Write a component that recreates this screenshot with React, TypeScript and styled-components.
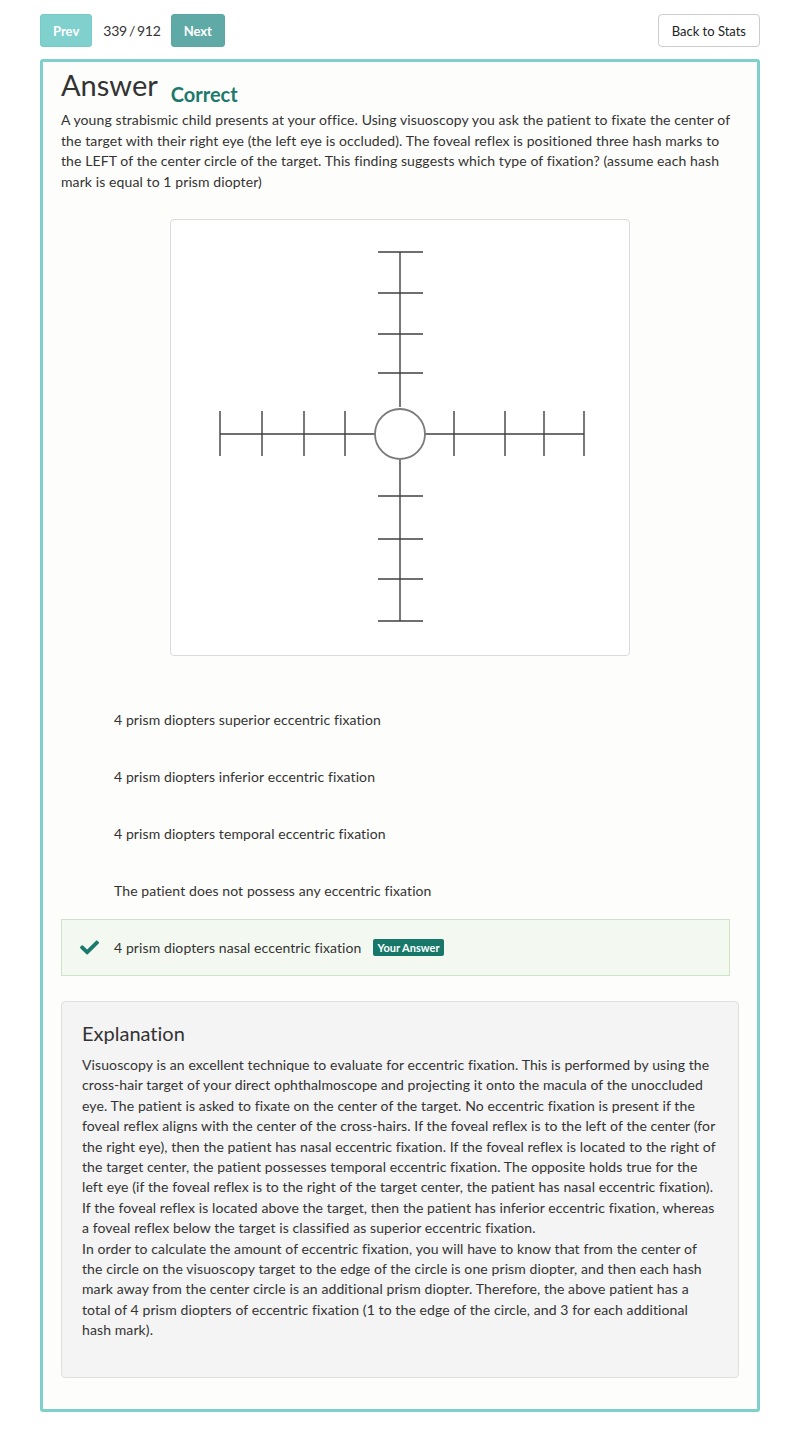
import * as React from 'react';
import styled, { createGlobalStyle } from 'styled-components';
import { FaCheck } from 'react-icons/fa';

const GlobalStyle = createGlobalStyle`
    body {
        margin: 0;
        background: #ffffff;
        font-family: Lato, "Open Sans", sans-serif;
        color: #333333;
        font-size: 14px;
        font-variant-ligatures: none;
    }
`;

const Page = styled.div`
    width: 720px;
    padding: 14px 40px 24px;
`;

const TopBar = styled.div`
    display: flex;
    align-items: center;
    height: 33px;
    margin-bottom: 12px;
`;

const NavButton = styled.button<{ $dark?: boolean }>`
    height: 33px;
    padding: 0 12px;
    border: 1px solid ${(p) => (p.$dark ? '#5aa8a4' : '#76cbc8')};
    border-radius: 3px;
    background: ${(p) => (p.$dark ? '#5faaa6' : '#80d0cd')};
    color: #ffffff;
    font-family: Lato, sans-serif;
    font-weight: 700;
    font-size: 13px;
    cursor: pointer;
`;

const Counter = styled.span`
    margin: 0 10px 0 11px;
    font-size: 14px;
    letter-spacing: -0.2px;
    word-spacing: -1.5px;
    color: #333;
`;

const Spacer = styled.div`
    flex: 1;
`;

const BackButton = styled.button`
    height: 33px;
    padding: 0 13px;
    border: 1px solid #cccccc;
    border-radius: 4px;
    background: #ffffff;
    color: #222;
    font-family: Lato, sans-serif;
    font-size: 13px;
`;

const Card = styled.div`
    border: 3px solid #7fcfcb;
    border-radius: 3px;
    background: #fdfdfb;
    padding: 6px 18px 31px;
    letter-spacing: 0.1px;
`;

const HeadRow = styled.div`
    display: flex;
    align-items: flex-start;
    letter-spacing: 0;
`;

const Title = styled.h2`
    margin: 0;
    font-size: 29px;
    line-height: 33px;
    font-weight: 400;
    color: #333;
`;

const Verdict = styled.span`
    margin-left: 13px;
    padding-top: 14px;
    font-size: 20px;
    line-height: 24px;
    font-weight: 700;
    color: #1b7a6b;
`;

const Question = styled.p`
    margin: 4px 0 27px;
    line-height: 20.5px;
    color: #333;
`;

const Figure = styled.div`
    width: 458px;
    height: 435px;
    margin: 0 auto;
    border: 1px solid #dcdcdc;
    border-radius: 4px;
    background: #ffffff;
`;

const Options = styled.div`
    margin: 35px 9px 25px 0;
    display: flex;
    flex-direction: column;
`;

const Option = styled.div<{ $picked?: boolean }>`
    display: flex;
    align-items: center;
    height: 57px;
    box-sizing: border-box;
    padding: 0 18px;
    border: 1px solid ${(p) => (p.$picked ? '#cfe3c8' : 'transparent')};
    background: ${(p) => (p.$picked ? '#f3f9f1' : 'transparent')};
    color: #333;
    font-size: 14px;
`;

const Mark = styled.span`
    width: 20px;
    margin-right: 14px;
    display: flex;
    align-items: center;
    color: #1a7a6b;
    font-size: 19px;
`;

const Badge = styled.span`
    margin-left: 11px;
    padding: 2px 5px;
    border-radius: 2px;
    background: #17786a;
    color: #ffffff;
    font-size: 11px;
    line-height: 13px;
    font-weight: 700;
    letter-spacing: 0;
`;

const Explain = styled.div`
    border: 1px solid #e0e0e0;
    border-radius: 4px;
    background: #f4f4f4;
    padding: 20px 20px 36px;
`;

const ExplainTitle = styled.h3`
    margin: 0 0 11px;
    font-size: 20px;
    line-height: 22px;
    font-weight: 400;
    letter-spacing: 0;
    color: #333;
`;

const ExplainText = styled.p`
    margin: 0;
    line-height: 20.4px;
    color: #333;
`;

const Target = () => {
    const cx = 229;
    const cy = 214;
    const hx = [49, 91, 133, 174, 283, 334, 373, 413];
    const vy = [32, 73, 114, 153, 276, 319, 359, 401];
    return (
        <svg width="458" height="435" viewBox="0 0 458 435">
            <g stroke="#3f3f3f" strokeWidth="1.4" fill="none">
                <line x1={49} y1={cy} x2={cx - 25} y2={cy} />
                <line x1={cx + 25} y1={cy} x2={413} y2={cy} />
                <line x1={cx} y1={32} x2={cx} y2={cy - 27} />
                <line x1={cx} y1={cy + 26} x2={cx} y2={401} />
                {hx.map((x) => (
                    <line key={'h' + x} x1={x} y1={cy - 23} x2={x} y2={cy + 22} />
                ))}
                {vy.map((y) => (
                    <line key={'v' + y} x1={cx - 22} y1={y} x2={cx + 23} y2={y} />
                ))}
            </g>
            <circle cx={cx} cy={cy} r={25} fill="#ffffff" stroke="#7a7a7a" strokeWidth="1.8" />
        </svg>
    );
};

const choices = [
    '4 prism diopters superior eccentric fixation',
    '4 prism diopters inferior eccentric fixation',
    '4 prism diopters temporal eccentric fixation',
    'The patient does not possess any eccentric fixation',
];

export default function App() {
    return (
        <Page>
            <GlobalStyle />
            <TopBar>
                <NavButton>Prev</NavButton>
                <Counter>339 / 912</Counter>
                <NavButton $dark>Next</NavButton>
                <Spacer />
                <BackButton>Back to Stats</BackButton>
            </TopBar>
            <Card>
                <HeadRow>
                    <Title>Answer</Title>
                    <Verdict>Correct</Verdict>
                </HeadRow>
                <Question>
                    A young strabismic child presents at your office. Using visuoscopy you ask the patient to
                    fixate the center of the target with their right eye (the left eye is occluded). The foveal
                    reflex is positioned three hash marks to the LEFT of the center circle of the target. This
                    finding suggests which type of fixation? (assume each hash mark is equal to 1 prism diopter)
                </Question>
                <Figure>
                    <Target />
                </Figure>
                <Options>
                    {choices.map((c) => (
                        <Option key={c}>
                            <Mark />
                            {c}
                        </Option>
                    ))}
                    <Option $picked>
                        <Mark>
                            <FaCheck />
                        </Mark>
                        4 prism diopters nasal eccentric fixation
                        <Badge>Your Answer</Badge>
                    </Option>
                </Options>
                <Explain>
                    <ExplainTitle>Explanation</ExplainTitle>
                    <ExplainText>
                        Visuoscopy is an excellent technique to evaluate for eccentric fixation. This is performed
                        by using the cross-hair target of your direct ophthalmoscope and projecting it onto the
                        macula of the unoccluded eye. The patient is asked to fixate on the center of the target. No
                        eccentric fixation is present if the foveal reflex aligns with the center of the
                        cross-hairs. If the foveal reflex is to the left of the center (for the right eye), then the
                        patient has nasal eccentric fixation. If the foveal reflex is located to the right of the
                        target center, the patient possesses temporal eccentric fixation. The opposite holds true
                        for the left eye (if the foveal reflex is to the right of the target center, the patient has
                        nasal eccentric fixation). If the foveal reflex is located above the target, then the
                        patient has inferior eccentric fixation, whereas a foveal reflex below the target is
                        classified as superior eccentric fixation.
                        <br />
                        In order to calculate the amount of eccentric fixation, you will have to know that from the
                        center of the circle on the visuoscopy target to the edge of the circle is one prism
                        diopter, and then each hash mark away from the center circle is an additional prism diopter.
                        Therefore, the above patient has a total of 4 prism diopters of eccentric fixation (1 to the
                        edge of the circle, and 3 for each additional hash mark).
                    </ExplainText>
                </Explain>
            </Card>
        </Page>
    );
}
